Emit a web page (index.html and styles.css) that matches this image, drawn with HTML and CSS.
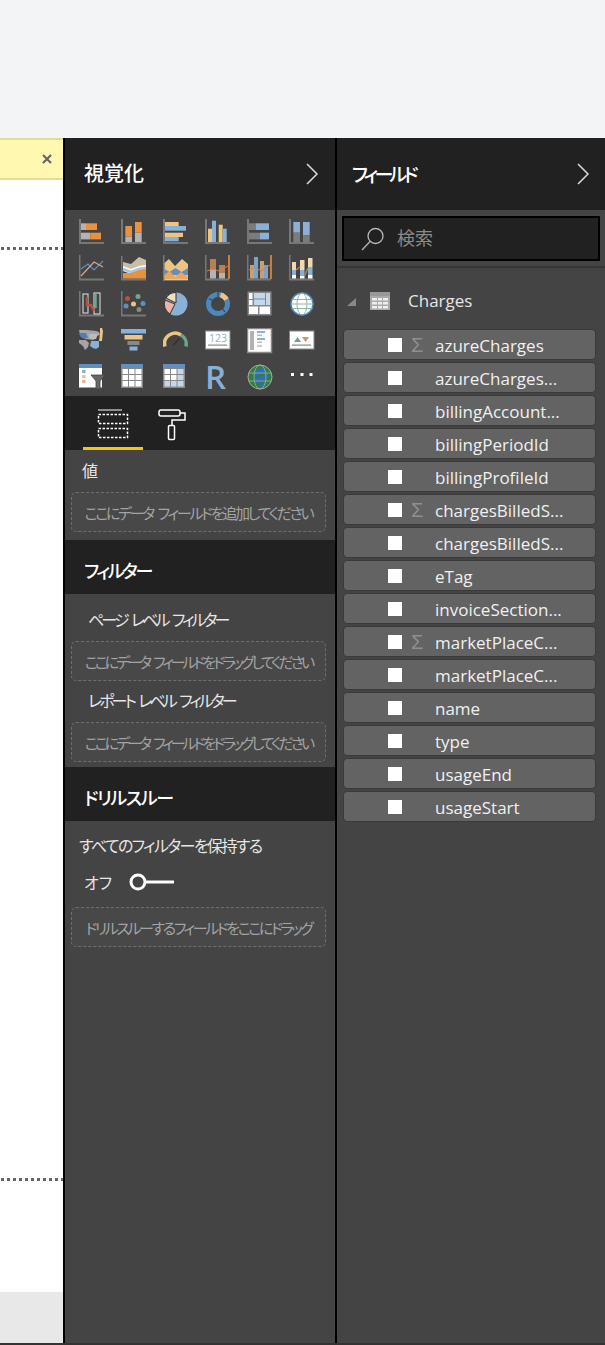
FILE: index.html

```html
<!DOCTYPE html>
<html lang="ja">
<head>
    <meta charset="UTF-8">
    <title>視覚化</title>
    <link rel="stylesheet" href="styles.css">
</head>
<body>
<div class="topbar"></div>
<div class="main">
    <div class="canvas">
        <div class="notice">
            <svg class="close" width="12" height="12" viewBox="0 0 12 12"><path d="M2 2l8 8M10 2l-8 8" stroke="#666" stroke-width="2.2"/></svg>
        </div>
        <div class="page">
            <div class="dots dots-top"></div>
            <div class="dots dots-bottom"></div>
        </div>
        <div class="tabs"></div>
    </div>

    <div class="viz">
        <div class="head head-main">
            <span class="head-title">視覚化</span>
            <svg class="chevron" width="14" height="22" viewBox="0 0 14 22"><path d="M2 1l10 10L2 21" fill="none" stroke="#d5dbe0" stroke-width="1.5"/></svg>
        </div>

        <div class="icons">
            <!-- row 1 -->
            <svg class="ico" viewBox="0 0 26 26"><path d="M0 1h2v23h23v2H0z" fill="#777"/><rect x="2" y="5.3" width="5" height="6.7" fill="#b3b3b3"/><rect x="7" y="5.3" width="11" height="6.7" fill="#e8913f"/><rect x="2" y="14.7" width="9.3" height="6.7" fill="#b3b3b3"/><rect x="11.3" y="14.7" width="10.7" height="6.7" fill="#e8913f"/></svg>
            <svg class="ico" viewBox="0 0 26 26"><path d="M0 1h2v23h23v2H0z" fill="#777"/><rect x="4.3" y="8" width="6.7" height="10.7" fill="#e8913f"/><rect x="4.3" y="18.7" width="6.7" height="5.3" fill="#b3b3b3"/><rect x="14" y="4" width="6.7" height="10.7" fill="#e8913f"/><rect x="14" y="14.7" width="6.7" height="9.3" fill="#b3b3b3"/></svg>
            <svg class="ico" viewBox="0 0 26 26"><path d="M0 1h2v23h23v2H0z" fill="#777"/><rect x="2" y="4" width="13.7" height="4" fill="#ecc584"/><rect x="2" y="8" width="21" height="4.7" fill="#8ab0d8"/><rect x="2" y="14.7" width="18" height="4.3" fill="#ecc584"/><rect x="2" y="19" width="13.7" height="4.3" fill="#8ab0d8"/></svg>
            <svg class="ico" viewBox="0 0 26 26"><path d="M0 1h2v23h23v2H0z" fill="#777"/><rect x="3" y="10.7" width="4" height="13.3" fill="#ecc584"/><rect x="7" y="2.7" width="4" height="21.3" fill="#8ab0d8"/><rect x="13.7" y="6.7" width="4" height="17.3" fill="#ecc584"/><rect x="17.7" y="10.7" width="4" height="13.3" fill="#8ab0d8"/></svg>
            <svg class="ico" viewBox="0 0 26 26"><path d="M0 1h2v23h23v2H0z" fill="#777"/><rect x="2" y="5.3" width="6.7" height="6.7" fill="#7c7c7c"/><rect x="8.7" y="5.3" width="13.3" height="6.7" fill="#8ab0d8"/><rect x="2" y="14.7" width="10.7" height="6.7" fill="#7c7c7c"/><rect x="12.7" y="14.7" width="9.3" height="6.7" fill="#8ab0d8"/></svg>
            <svg class="ico" viewBox="0 0 26 26"><path d="M0 1h2v23h23v2H0z" fill="#777"/><rect x="4.3" y="4" width="6.7" height="10.7" fill="#8ab0d8"/><rect x="4.3" y="14.7" width="6.7" height="9.3" fill="#7c7c7c"/><rect x="14" y="4" width="6.7" height="13.3" fill="#8ab0d8"/><rect x="14" y="17.3" width="6.7" height="6.7" fill="#7c7c7c"/></svg>
            <!-- row 2 -->
            <svg class="ico" viewBox="0 0 26 26"><path d="M0 0h1.5v23.5H25V25.5H0z" fill="#777"/><path d="M2 14l7-5 6 6 9-9" fill="none" stroke="#5f8fc0" stroke-width="1.2"/><path d="M2 21L15 7l9 5" fill="none" stroke="#d9a595" stroke-width="1.2"/></svg>
            <svg class="ico" viewBox="0 0 26 26"><path d="M0 1h1.5v22.5H25V25.5H0z" fill="#777"/><path d="M2 7l8 2 8-7 7 3v7l-7 2-8 2-8-3z" fill="#c9bda6"/><path d="M2 11l8 3 8-3 7-1v5l-7 2-8 2-8-3z" fill="#fff"/><path d="M2 12.5l8 3 8-3 7-1v3l-7 2-8 2-8-3z" fill="#a9c8e0"/><path d="M2 18l8 0 8-3 7-1v9.5H2z" fill="#e8913f"/></svg>
            <svg class="ico" viewBox="0 0 26 26"><path d="M0 0h1.5v24H25V26H0z" fill="#777"/><path d="M1.5 8L6 4l6 7 7-7 6 5v16H1.5z" fill="#ecc584"/><path d="M1.5 14l5 3 6-4 6 4 6.5-4v7H1.5z" fill="#5f8fc0"/><path d="M1.5 20l5-4 5.5 6 6-5 7 5v2H1.5z" fill="#f0a55f"/></svg>
            <svg class="ico" viewBox="0 0 26 26"><path d="M0 0h1.5v23.5H24V25.5H0z" fill="#777"/><rect x="23" y="0" width="2" height="24" fill="#c47f3f"/><rect x="5" y="4" width="6" height="10" fill="#b5814f"/><rect x="5" y="14" width="6" height="9.5" fill="#b3b3b3"/><rect x="14" y="10" width="6" height="8" fill="#b5814f"/><rect x="14" y="18" width="6" height="5.5" fill="#b3b3b3"/><path d="M2 16l6-2 6 2 9-5" fill="none" stroke="#dd7a55" stroke-width="1"/></svg>
            <svg class="ico" viewBox="0 0 26 26"><path d="M0 0h1.5v23.5H24V25.5H0z" fill="#777"/><rect x="23" y="0" width="2" height="24" fill="#c47f3f"/><rect x="3" y="10" width="4" height="13.5" fill="#c2a373"/><rect x="7" y="2" width="4" height="21.5" fill="#7ca3cc"/><rect x="13" y="6" width="4" height="17.5" fill="#c2a373"/><rect x="17" y="10" width="4" height="13.5" fill="#7ca3cc"/><path d="M2 15l6-3 6 4 9-6" fill="none" stroke="#dd7a55" stroke-width="1"/></svg>
            <svg class="ico" viewBox="0 0 26 26"><path d="M0 0h1.5v23.5H25V25.5H0z" fill="#777"/><rect x="3" y="7" width="4" height="8" fill="#f0d9b0"/><rect x="3" y="15" width="4" height="5" fill="#8ab0d8"/><rect x="3" y="20" width="4" height="3.5" fill="#fff"/><rect x="11" y="5" width="4.5" height="10" fill="#f0d9b0"/><rect x="11" y="15" width="4.5" height="6" fill="#8ab0d8"/><rect x="11" y="21" width="4.5" height="2.5" fill="#fff"/><rect x="19" y="3" width="4.5" height="9" fill="#f0d9b0"/><rect x="19" y="12" width="4.5" height="8" fill="#8ab0d8"/><rect x="19" y="20" width="4.5" height="3.5" fill="#fff"/><path d="M7 15l4-3M15.5 21l3.5-8" stroke="#b5814f" stroke-width="1.5"/></svg>
            <!-- row 3 -->
            <svg class="ico" viewBox="0 0 26 26"><path d="M0 0h1.5v23.5H25V25.5H0z" fill="#777"/><rect x="4" y="3" width="5" height="19" fill="none" stroke="#ccc" stroke-width="1.2"/><rect x="15" y="2" width="6" height="21" fill="none" stroke="#ccc" stroke-width="1.2"/><path d="M8 6v8h4l3 6" fill="none" stroke="#b5533c" stroke-width="2.5"/><path d="M16.5 3v14" stroke="#6fa58f" stroke-width="2.5"/></svg>
            <svg class="ico" viewBox="0 0 26 26"><path d="M0 0h1.5v23.5H25V25.5H0z" fill="#777"/><circle cx="6.5" cy="7.5" r="2.5" fill="#b5533c"/><circle cx="17" cy="5.5" r="2.5" fill="#6fa58f"/><circle cx="5" cy="15" r="2.5" fill="#5f8fc0"/><circle cx="12.5" cy="13" r="2.5" fill="#ecc584"/><circle cx="22" cy="12.5" r="2.5" fill="#5f8fc0"/><circle cx="18" cy="18.5" r="2.5" fill="#888"/></svg>
            <svg class="ico" viewBox="0 0 26 26"><circle cx="13" cy="13" r="11.5" fill="#8ab0d8"/><path d="M13 12L13 1.5A11.5 11.5 0 0 0 3 7z" fill="#f3dfb8" stroke="#333" stroke-width="1"/><path d="M12 13L2 9A11.5 11.5 0 0 0 7 23z" fill="#ecb4a5" stroke="#333" stroke-width="1"/></svg>
            <svg class="ico" viewBox="0 0 26 26"><circle cx="13" cy="13" r="9.5" fill="none" stroke="#4f86bb" stroke-width="5"/><path d="M15.5 3.8A9.5 9.5 0 0 1 21.5 8.5" fill="none" stroke="#ecc584" stroke-width="5"/><path d="M4 7.5l3.5 2M13 1v5M20 21l-3-4" stroke="#444" stroke-width="1.2"/></svg>
            <svg class="ico" viewBox="0 0 26 26"><rect x="0.5" y="0.5" width="24" height="24" fill="#888"/><rect x="2" y="2" width="3.5" height="6" fill="#fff"/><rect x="2" y="9" width="3.5" height="5" fill="#fff"/><rect x="7" y="2" width="11" height="5.5" fill="#c3d8ec"/><rect x="7" y="8.5" width="11" height="5.5" fill="#c3d8ec"/><rect x="19" y="2" width="4" height="12" fill="#c3d8ec"/><rect x="2" y="15.5" width="9" height="7.5" fill="#fff"/><rect x="12.5" y="15.5" width="10.5" height="7.5" fill="#fff"/></svg>
            <svg class="ico" viewBox="0 0 26 26"><circle cx="13" cy="13" r="11" fill="#fff" stroke="#4f86bb" stroke-width="1.5"/><ellipse cx="13" cy="13" rx="5" ry="11" fill="none" stroke="#8fb5a5" stroke-width="1"/><path d="M3 8.5h20M2 13h22M3 17.5h20" stroke="#8fb5a5" stroke-width="1"/></svg>
            <!-- row 4 -->
            <svg class="ico" viewBox="0 0 26 26"><path d="M0 2l8 0 9 1 3 1 1 3-4 1-2 4-8-1-3-1-3-3z" fill="#a5a5a5"/><path d="M0 5h7l2 5H3L1 8z" fill="#4f7fb0"/><path d="M10 6h9l-2 5h-6z" fill="#bbb"/><path d="M21 0h2l1 3-1 10h-3l1-7z" fill="#ecc584"/><path d="M0 12h7l3 3-1 4-3 3-2-4-4-3z" fill="#a5a5a5"/><path d="M12 13h8v6l-3 2-3-1-3-2z" fill="#8ab0d8"/></svg>
            <svg class="ico" viewBox="0 0 26 26"><rect x="0" y="1" width="25" height="4.5" fill="#8ab0d8"/><rect x="3.5" y="7" width="18" height="4.5" fill="#ecc584"/><rect x="6.5" y="13" width="12" height="4" fill="#888"/><rect x="8.5" y="18.5" width="8" height="4" fill="#8ab0d8"/></svg>
            <svg class="ico" viewBox="0 0 26 26"><path d="M2 18.5A10.5 10.5 0 0 1 18 7" fill="none" stroke="#ecc584" stroke-width="3.5"/><path d="M18 7A10.5 10.5 0 0 1 23 18.5" fill="none" stroke="#6fa58f" stroke-width="3.5"/><path d="M10.3 17l6-6.7" stroke="#333" stroke-width="1.8"/></svg>
            <svg class="ico" viewBox="0 0 26 26"><rect x="0.5" y="3" width="24.5" height="18" fill="#fff" stroke="#888" stroke-width="1"/><text class="ico-num" x="13" y="14" text-anchor="middle">123</text><rect x="3" y="16.5" width="19" height="1.2" fill="#888"/></svg>
            <svg class="ico" viewBox="0 0 26 26"><rect x="0.5" y="0.5" width="24" height="24" fill="#fff" stroke="#888" stroke-width="1.5"/><rect x="3" y="3" width="4" height="19" fill="#b3b3b3"/><rect x="10" y="3" width="8" height="2" fill="#8ab0d8"/><rect x="10" y="6.5" width="5" height="1.5" fill="#bbb"/><rect x="10" y="10" width="8" height="2" fill="#8ab0d8"/><rect x="10" y="13.5" width="5" height="1.5" fill="#bbb"/><rect x="10" y="17" width="5" height="2" fill="#ccc"/></svg>
            <svg class="ico" viewBox="0 0 26 26"><rect x="0.5" y="3" width="24.5" height="18" fill="#fff" stroke="#888" stroke-width="1"/><path d="M5 14l3.5-5 3.5 5z" fill="#6fa58f"/><path d="M13 9h7l-3.5 5z" fill="#e08a70"/><rect x="3" y="16.5" width="19" height="1.2" fill="#888"/></svg>
            <!-- row 5 -->
            <svg class="ico" viewBox="0 0 26 26"><rect x="0" y="0" width="23" height="23.5" fill="#fff"/><rect x="0" y="0" width="23" height="4" fill="#5f8fc0"/><rect x="3" y="6" width="3.5" height="3" fill="#8ab0d8"/><rect x="3" y="11" width="3.5" height="3" fill="#ecc584"/><rect x="3" y="16" width="3.5" height="3" fill="#ecb4a5"/><path d="M12 11h14l-5 6v8h-4v-8z" fill="#666" stroke="#444" stroke-width="0.8"/></svg>
            <svg class="ico" viewBox="0 0 26 26"><rect x="0" y="0" width="22" height="24" fill="#888"/><rect x="0" y="0" width="22" height="4" fill="#5f8fc0"/><path d="M1.5 5h5.5v5H1.5zM8 5h5.5v5H8zM14.5 5h6v5h-6zM1.5 11h5.5v5H1.5zM8 11h5.5v5H8zM14.5 11h6v5h-6zM1.5 17h5.5v5.500H1.5zM8 17h5.5v5.500H8zM14.5 17h6v5.500h-6z" fill="#fff"/></svg>
            <svg class="ico" viewBox="0 0 26 26"><rect x="0" y="0" width="22" height="24" fill="#888"/><rect x="0" y="0" width="22" height="4" fill="#5f8fc0"/><path d="M1.5 5h5.5v5H1.5zM8 5h5.5v5H8zM1.5 11h5.5v5H1.5zM8 11h5.5v5H8z" fill="#fff"/><path d="M14.5 5h6v5h-6zM14.5 11h6v5h-6zM1.5 17h5.5v5.500H1.5zM8 17h5.5v5.500H8zM14.5 17h6v5.500h-6z" fill="#c3d8ec"/></svg>
            <span class="ico ico-r">R</span>
            <svg class="ico" viewBox="0 0 26 26"><circle cx="13" cy="13" r="12" fill="#2f7f3f"/><path d="M5 8l10-4 5 3-10 5zM6 16l13-6 3 3-12 7zM11 21l8-3-2 5z" fill="#2a6fc0"/><circle cx="13" cy="13" r="12" fill="none" stroke="#aaa" stroke-width="1"/><ellipse cx="13" cy="13" rx="6" ry="12" fill="none" stroke="#aaa" stroke-width="0.8"/><path d="M2 9h22M2 17h22" stroke="#aaa" stroke-width="0.8"/></svg>
            <svg class="ico" viewBox="0 0 26 26"><rect x="2" y="9" width="3" height="3" fill="#fff"/><rect x="11.5" y="9" width="3" height="3" fill="#fff"/><rect x="20.5" y="9" width="3" height="3" fill="#fff"/></svg>
        </div>

        <div class="viz-tabs">
            <div class="viz-tab viz-tab-on">
                <svg width="32" height="30" viewBox="0 0 32 30"><path d="M1 1h24" stroke="#fff" stroke-width="1"/><rect x="1.5" y="5.5" width="29" height="9" fill="none" stroke="#fff" stroke-width="1.5" stroke-dasharray="2.5 1.5"/><rect x="1.5" y="19.5" width="29" height="9" fill="none" stroke="#fff" stroke-width="1.5" stroke-dasharray="2.5 1.5"/></svg>
            </div>
            <div class="viz-tab">
                <svg width="30" height="32" viewBox="0 0 30 32"><rect x="1" y="1" width="21" height="6" rx="2" fill="none" stroke="#fff" stroke-width="1.5"/><path d="M22 4h5v7H14v5" fill="none" stroke="#fff" stroke-width="1.5"/><rect x="10.5" y="16.5" width="6" height="14" rx="1" fill="none" stroke="#fff" stroke-width="1.5"/></svg>
            </div>
        </div>

        <div class="sect sect-value">
            <div class="label">値</div>
            <div class="drop drop-add">ここにデータ フィールドを追加してください</div>
        </div>

        <div class="head head-filter">フィルター</div>
        <div class="sect sect-filter">
            <div class="label label-in">ページ レベル フィルター</div>
            <div class="drop drop-drag">ここにデータ フィールドをドラッグしてください</div>
            <div class="label label-in">レポート レベル フィルター</div>
            <div class="drop drop-drag">ここにデータ フィールドをドラッグしてください</div>
        </div>

        <div class="head head-drill">ドリルスルー</div>
        <div class="sect sect-drill">
            <div class="label label-keep">すべてのフィルターを保持する</div>
            <div class="toggle-row">
                <span class="toggle-text">オフ</span>
                <svg width="46" height="18" viewBox="0 0 46 18"><circle cx="9" cy="9" r="7" fill="none" stroke="#fff" stroke-width="3"/><path d="M16 9h29" stroke="#fff" stroke-width="3"/></svg>
            </div>
            <div class="drop drop-through">ドリルスルーするフィールドをここにドラッグ</div>
        </div>
    </div>

    <div class="fields">
        <div class="head head-main">
            <span class="head-fields">フィールド</span>
            <svg class="chevron" width="14" height="22" viewBox="0 0 14 22"><path d="M2 1l10 10L2 21" fill="none" stroke="#d5dbe0" stroke-width="1.5"/></svg>
        </div>
        <div class="search-wrap">
            <div class="search">
                <svg width="26" height="26" viewBox="0 0 26 26"><circle cx="15.5" cy="10" r="7.5" fill="none" stroke="#b5b5b5" stroke-width="1.3"/><path d="M10 15.5L2 24" stroke="#b5b5b5" stroke-width="1.3"/></svg>
                <span class="search-text">検索</span>
            </div>
        </div>
        <div class="table-row">
            <span class="tri"></span>
            <svg width="20" height="18" viewBox="0 0 20 18"><rect width="20" height="18" fill="#aaa"/><rect width="20" height="4" fill="#999"/><path d="M2 6h5v2.5H2zM8 6h4v2.5H8zM13 6h5v2.5h-5zM2 10h5v2.5H2zM8 10h4v2.5H8zM13 10h5v2.5h-5zM2 14h5v2.5H2zM8 14h4v2.5H8zM13 14h5v2.5h-5z" fill="#eee"/></svg>
            <span class="table-name">Charges</span>
        </div>
        <div class="rows">
            <div class="row"><i class="check"></i><span class="sigma">Σ</span><span class="name">azureCharges</span></div>
            <div class="row"><i class="check"></i><span class="sigma"></span><span class="name">azureCharges...</span></div>
            <div class="row"><i class="check"></i><span class="sigma"></span><span class="name">billingAccount...</span></div>
            <div class="row"><i class="check"></i><span class="sigma"></span><span class="name">billingPeriodId</span></div>
            <div class="row"><i class="check"></i><span class="sigma"></span><span class="name">billingProfileId</span></div>
            <div class="row"><i class="check"></i><span class="sigma">Σ</span><span class="name">chargesBilledS...</span></div>
            <div class="row"><i class="check"></i><span class="sigma"></span><span class="name">chargesBilledS...</span></div>
            <div class="row"><i class="check"></i><span class="sigma"></span><span class="name">eTag</span></div>
            <div class="row"><i class="check"></i><span class="sigma"></span><span class="name">invoiceSection...</span></div>
            <div class="row"><i class="check"></i><span class="sigma">Σ</span><span class="name">marketPlaceC...</span></div>
            <div class="row"><i class="check"></i><span class="sigma"></span><span class="name">marketPlaceC...</span></div>
            <div class="row"><i class="check"></i><span class="sigma"></span><span class="name">name</span></div>
            <div class="row"><i class="check"></i><span class="sigma"></span><span class="name">type</span></div>
            <div class="row"><i class="check"></i><span class="sigma"></span><span class="name">usageEnd</span></div>
            <div class="row"><i class="check"></i><span class="sigma"></span><span class="name">usageStart</span></div>
        </div>
    </div>
</div>
<div class="footline"></div>
</body>
</html>
```

FILE: styles.css

```css
body {
    margin: 0;
    width: 605px;
    height: 1345px;
    overflow: hidden;
    background: #333;
    color: #e6e6e6;
    font-family: "Open Sans", "Noto Sans CJK JP", sans-serif;
    font-feature-settings: "palt";
}

.topbar {
    height: 138px;
    background: #f3f4f6;
}

.main {
    display: flex;
    height: 1205px;
}

.footline {
    height: 2px;
    background: #333;
}

/* report canvas on the left */
.canvas {
    width: 63px;
    display: flex;
    flex-direction: column;
    background: #fff;
}

.notice {
    height: 38px;
    display: flex;
    align-items: center;
    justify-content: flex-end;
    padding-right: 10px;
    background: #fff8b0;
    border-top: 2px solid #e3dd92;
    border-bottom: 2px solid #e3dd92;
}

.page {
    flex: 1;
    padding-top: 67px;
}

.dots {
    height: 3px;
    margin-left: 1px;
    background: repeating-linear-gradient(90deg, #666 0, #666 3px, transparent 3px, transparent 6px);
}

.dots-bottom {
    margin-top: 928px;
}

.tabs {
    height: 51px;
    background: #e8e8e8;
}

/* panels */
.viz {
    width: 270px;
    border-left: 2px solid #000;
    border-right: 2px solid #000;
    background: #444;
}

.fields {
    flex: 1;
    background: #444;
}

.head {
    height: 54px;
    box-sizing: border-box;
    display: flex;
    align-items: center;
    padding: 6px 0 0 19px;
    background: #212121;
    color: #fff;
    font-size: 18px;
    font-weight: 500;
    white-space: nowrap;
}

.head-filter {
    letter-spacing: -2.4px;
}

.head-drill {
    letter-spacing: -1.3px;
}

.head-main {
    height: 72px;
    justify-content: space-between;
    padding: 0 16px 0 19px;
}

.head-title {
    font-size: 20px;
    margin-top: -4px;
}

.head-fields {
    margin-left: -4px;
    font-size: 19px;
    letter-spacing: -3.8px;
}

.fields .head-main {
    padding-right: 15px;
}

/* visual gallery */
.icons {
    height: 186px;
    box-sizing: border-box;
    display: grid;
    grid-template-columns: repeat(6, 42px);
    grid-auto-rows: 36.5px;
    padding: 8px 0 0 14px;
}

.ico {
    display: block;
    width: 26px;
    height: 26px;
}

.ico-num {
    font-family: "Open Sans", sans-serif;
    font-size: 10.5px;
    fill: #8ab0d8;
}

.ico-r {
    color: #86b0d8;
    font-size: 33px;
    font-weight: 600;
    line-height: 26px;
}

.viz-tabs {
    height: 54px;
    display: flex;
    padding-left: 18px;
    background: #212121;
}

.viz-tab {
    width: 60px;
    box-sizing: border-box;
    display: flex;
    justify-content: center;
    padding-top: 13px;
}

.viz-tab-on {
    border-bottom: 3px solid #f2c80f;
}

.sect {
    padding: 0 9px 0 6px;
}

.sect-value {
    height: 90px;
    box-sizing: border-box;
    padding-top: 10px;
}

.sect-filter {
    height: 173px;
    box-sizing: border-box;
    padding-top: 14px;
}

.sect-drill {
    padding-top: 14px;
}

.label {
    height: 22px;
    line-height: 22px;
    padding-left: 11px;
    font-size: 16px;
    margin-bottom: 10px;
    white-space: nowrap;
}

.label-in {
    padding-left: 17px;
    margin: 1px 0 10px;
    letter-spacing: -2.9px;
    word-spacing: 3px;
}

.label-in ~ .label-in {
    margin-top: 9px;
}

.label-keep {
    padding-left: 8px;
    margin-bottom: 0;
    letter-spacing: -1.6px;
}

.drop {
    height: 40px;
    box-sizing: border-box;
    display: flex;
    align-items: center;
    justify-content: center;
    background: #484848;
    border: 1px dashed #6e6e6e;
    border-radius: 5px;
    color: #a3a3a3;
    font-size: 15px;
    white-space: nowrap;
}

.drop-add {
    letter-spacing: -2.3px;
    word-spacing: 3px;
}

.drop-drag {
    letter-spacing: -3px;
    word-spacing: 3px;
}

.drop-through {
    letter-spacing: -2.4px;
}

.toggle-row {
    height: 40px;
    display: flex;
    align-items: center;
    margin: 5px 0 5px;
    padding-left: 13px;
    font-size: 16px;
}

.toggle-text {
    width: 45px;
}

/* field list */
.search-wrap {
    height: 58px;
    box-sizing: border-box;
    padding: 6px 5px 0;
    border-bottom: 2px solid #363636;
}

.search {
    height: 45px;
    box-sizing: border-box;
    display: flex;
    align-items: center;
    gap: 11px;
    padding-left: 16px;
    background: #212121;
    border: 2px solid #000;
    color: #8a8a8a;
    font-size: 18px;
}

.search-text {
    margin-top: -4px;
}

.table-row {
    height: 61px;
    box-sizing: border-box;
    display: flex;
    align-items: center;
    padding: 5px 0 0 10px;
    font-size: 17px;
}

.tri {
    width: 0;
    height: 0;
    margin: 2px 14px 0 0;
    border-left: 9px solid transparent;
    border-bottom: 8px solid #888;
}

.table-name {
    margin: -2px 0 0 18px;
}

.rows {
    display: flex;
    flex-direction: column;
    gap: 2px;
    padding: 0 9px 0 6px;
}

.row {
    height: 31px;
    box-sizing: border-box;
    display: flex;
    align-items: center;
    padding-left: 44px;
    background: #636363;
    border: 1px solid #3a3a3a;
    border-radius: 4px;
    color: #f0f0f0;
    font-size: 17px;
}

.name {
    padding-top: 2px;
}

.check {
    width: 14px;
    height: 14px;
    background: #fff;
}

.sigma {
    width: 33px;
    box-sizing: border-box;
    padding-left: 9px;
    color: #8f8f8f;
    font-family: "Liberation Sans", sans-serif;
    font-size: 20px;
    line-height: 1;
}
```
